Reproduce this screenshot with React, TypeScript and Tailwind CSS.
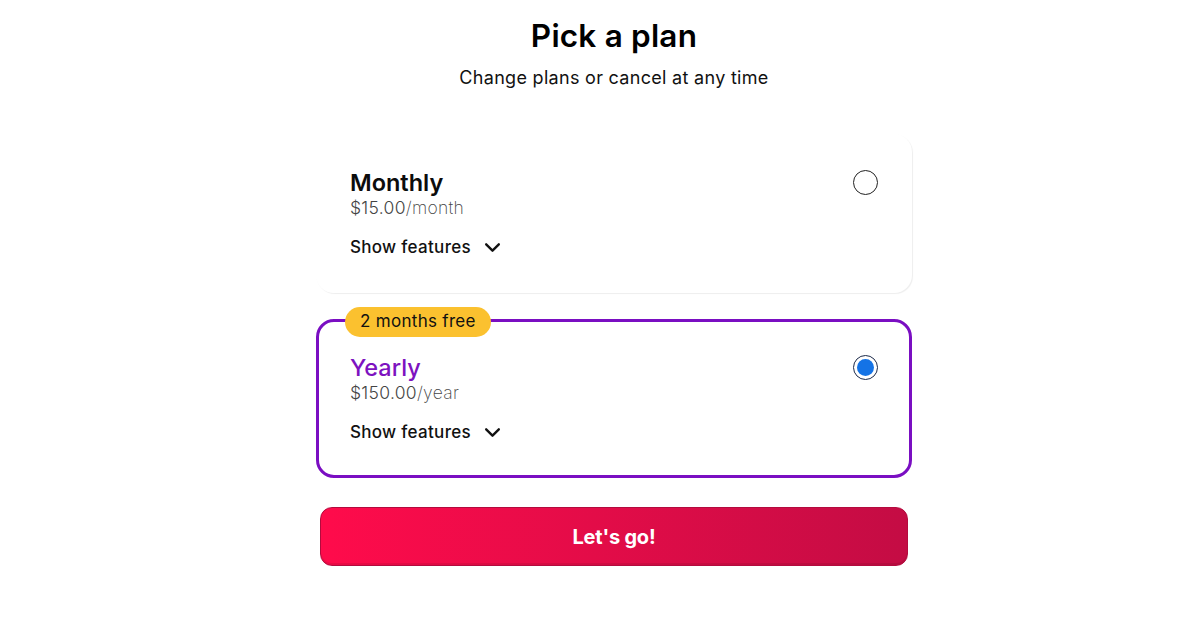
import { useState } from 'react';

type Plan = {
  id: string;
  name: string;
  price: string;
  period: string;
  badge?: string;
};

const plans: Plan[] = [
  { id: 'monthly', name: 'Monthly', price: '$15.00', period: '/month' },
  { id: 'yearly', name: 'Yearly', price: '$150.00', period: '/year', badge: '2 months free' },
];

function Chevron() {
  return (
    <svg width="19" height="19" viewBox="0 0 24 24" fill="none" stroke="#111" strokeWidth="3" strokeLinecap="round" strokeLinejoin="round">
      <path d="M4 8l8 8 8-8" />
    </svg>
  );
}

function Radio({ checked }: { checked: boolean }) {
  return (
    <div className={checked ? 'w-[25px] h-[25px] rounded-full border-[1.5px] border-[#1c2a4a] flex items-center justify-center bg-white' : 'w-[25px] h-[25px] rounded-full border-[1.5px] border-[#222] bg-white'}>
      {checked && <div className="w-[17px] h-[17px] rounded-full bg-[#1473e6]" />}
    </div>
  );
}

function PlanCard({ plan, selected, onSelect }: { plan: Plan; selected: boolean; onSelect: () => void }) {
  return (
    <div
      onClick={onSelect}
      className={
        selected
          ? 'relative h-[159px] rounded-[18px] border-[3.5px] border-[#7a0ec2] bg-white pl-[31px] pr-[30px] pt-[32px] cursor-pointer'
          : 'relative h-[159px] rounded-[18px] border-[3.5px] border-transparent bg-white pl-[31px] pr-[30px] pt-[32px] shadow-[1px_1px_1px_rgba(0,0,0,0.07)] cursor-pointer'
      }
    >
      {plan.badge && (
        <div className="absolute left-[26px] top-[-15px] h-[30px] px-[15px] rounded-full bg-[#fbc12f] flex items-center text-[17px] text-[#111] tracking-[0.3px]">
          {plan.badge}
        </div>
      )}
      <div className="flex items-start justify-between">
        <div>
          <div className={selected ? 'text-[23.5px] leading-[28px] font-medium text-[#7d12c0]' : 'text-[23.5px] leading-[28px] font-semibold text-[#0c0c0c]'}>
            {plan.name}
          </div>
          <div className="text-[17.5px] leading-[22px] font-light text-[#444] tracking-[0.3px]">
            {plan.price}
            <span className="font-extralight text-[#444]">{plan.period}</span>
          </div>
        </div>
        <div className="pt-[1px] pr-[1px]">
          <Radio checked={selected} />
        </div>
      </div>
      <div className="mt-[16px] flex items-center gap-[12px] text-[17px] font-medium text-[#111] tracking-[0.3px]">
        <span>Show features</span>
        <Chevron />
      </div>
    </div>
  );
}

export default function App() {
  const [selected, setSelected] = useState('yearly');

  return (
    <div className="w-[1200px] h-[630px] bg-white flex justify-center pl-[28px]" style={{ fontFamily: 'Inter, "Noto Sans", sans-serif' }}>
      <div className="w-[596px] flex flex-col">
        <h1 className="mt-[16px] text-center text-[31.5px] leading-[40px] font-semibold text-black tracking-[0.2px]">Pick a plan</h1>
        <p className="mt-[10px] text-center text-[18px] leading-[24px] text-[#111] tracking-[0.3px]">Change plans or cancel at any time</p>

        <div className="mt-[44px] flex flex-col gap-[26px]">
          {plans.map((p) => (
            <PlanCard key={p.id} plan={p} selected={selected === p.id} onSelect={() => setSelected(p.id)} />
          ))}
        </div>

        <button className="mt-[29px] mx-[4px] h-[59px] rounded-[12px] bg-gradient-to-r from-[#ff0b4b] to-[#c40c44] border border-[#b30b3e] text-white text-[20px] font-bold tracking-[-0.2px] shadow-[inset_0_-2px_0_rgba(0,0,0,0.08)]">
          Let's go!
        </button>
      </div>
    </div>
  );
}
